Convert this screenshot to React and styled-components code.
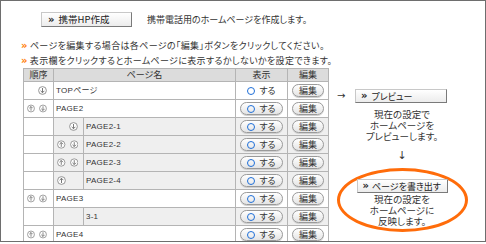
import React from "react";
import styled, { createGlobalStyle } from "styled-components";

const Global = createGlobalStyle`
  html, body { margin: 0; padding: 0; background: #fff; }
  body { font-family: "Noto Sans CJK JP", "Noto Sans", sans-serif; color: #333; }
`;

const Frame = styled.div`
  box-sizing: border-box;
  width: 486px;
  height: 242px;
  border: 1px solid #6e6e6e;
  overflow: hidden;
  font-size: 9px;
  font-feature-settings: "palt";
`;

const TopRow = styled.div`
  display: flex;
  align-items: center;
  gap: 15px;
  padding: 11px 0 0 40px;
`;

const BevelButton = styled.button`
  box-sizing: border-box;
  display: flex;
  align-items: center;
  gap: ${(p) => p.$gap || 4}px;
  width: ${(p) => p.$w}px;
  height: ${(p) => p.$h || 15}px;
  padding: 0 0 0 ${(p) => p.$pl || 6}px;
  border: 1px solid;
  border-color: #c8c8c8 #7a7a7a #7a7a7a #c8c8c8;
  background: linear-gradient(#ffffff, #ececec);
  font: inherit;
  font-size: ${(p) => p.$fs || 9.5}px;
  font-feature-settings: "palt";
  color: #222;
  line-height: 1;
  white-space: nowrap;
  overflow: hidden;
  cursor: pointer;
`;

const Chev = styled.span`
  font-family: "DejaVu Sans", sans-serif;
  font-weight: bold;
  font-size: 10px;
  color: ${(p) => p.$color || "#222"};
`;

const Desc = styled.span`
  font-size: 9px;
  color: #333;
`;

const Notes = styled.div`
  display: flex;
  flex-direction: column;
  padding: 11px 0 0 20px;
  line-height: 15px;
  letter-spacing: 0.35px;
`;

const Note = styled.div`
  display: flex;
  gap: 2px;
  align-items: center;
`;

const Main = styled.div`
  display: flex;
  align-items: flex-start;
  padding: 0 0 0 22px;
`;

const Table = styled.table`
  border-collapse: collapse;
  width: 305px;
  table-layout: fixed;
  font-size: 9px;
  & td, & th {
    border: 1px solid #b4b4b4;
    padding: 0;
    line-height: 12px;
    vertical-align: middle;
  }
`;

const HeadCell = styled.th`
  background: #dcdcdc;
  font-weight: normal;
  height: 12px;
  color: #333;
`;

const Row = styled.tr`
  height: 18px;
  background: ${(p) => (p.$sub ? "#efefef" : "#fff")};
  & > td { height: 16.6px; }
`;

const OrderCell = styled.td`
  background: #fff;
`;

const Arrows = styled.div`
  display: flex;
  justify-content: ${(p) => (p.$align === "start" ? "flex-start" : "flex-end")};
  gap: 4px;
  padding: 0 ${(p) => (p.$pr ?? 6)}px 0 ${(p) => (p.$pl ?? 3)}px;
  & svg { display: block; }
`;

const NameCell = styled.td`
  padding-left: 2px !important;
  font-family: "Liberation Sans", "Noto Sans CJK JP", sans-serif;
  font-size: 8px;
  letter-spacing: 0.25px;
  color: #333;
`;

const CenterCell = styled.td`
  text-align: center;
`;

const Pill = styled.span`
  box-sizing: border-box;
  display: inline-flex;
  align-items: center;
  justify-content: center;
  gap: 4px;
  width: ${(p) => p.$w}px;
  height: 13px;
  border-radius: 7px;
  border: 1px solid ${(p) => (p.$plain ? "transparent" : "#9a9a9a")};
  background: ${(p) =>
    p.$plain ? "transparent" : "linear-gradient(#ffffff, #e4e4e4)"};
  box-shadow: ${(p) => (p.$plain ? "none" : "0 1px 0 #d0d0d0")};
  font-size: 9px;
  line-height: 1;
  color: #333;
  vertical-align: middle;
`;

const Ring = styled.span`
  box-sizing: border-box;
  width: 8px;
  height: 8px;
  border-radius: 50%;
  border: 1.6px solid #1f6fd8;
`;

const Side = styled.div`
  display: flex;
  flex-direction: column;
  align-items: center;
  width: 130px;
  margin-left: 8px;
  padding-top: 21px;
`;

const PreviewRow = styled.div`
  display: flex;
  align-items: center;
  align-self: flex-start;
`;

const Arrow = styled.span`
  width: 18px;
  font-family: "DejaVu Sans", sans-serif;
  font-size: 10px;
  color: #333;
  line-height: 14px;
`;

const Caption = styled.div`
  text-align: center;
  font-size: 9.5px;
  line-height: 11px;
  color: #333;
  margin-top: ${(p) => p.$mt || 0}px;
`;

const DownArrow = styled.div`
  font-family: "DejaVu Sans", sans-serif;
  font-size: 11px;
  line-height: 12px;
  margin-top: 8px;
  color: #333;
`;

const Ellipse = styled.div`
  box-sizing: border-box;
  display: flex;
  flex-direction: column;
  align-items: center;
  width: 131px;
  height: 64px;
  margin-top: 6px;
  padding-top: 8px;
  border: 3px solid #ff6c0a;
  border-radius: 50%;
`;

function ArrowIcon({ up }) {
  return (
    <svg width="9" height="9" viewBox="0 0 9 9">
      <circle cx="4.5" cy="4.5" r="3.9" fill="#fff" stroke="#8a8a8a" strokeWidth="0.9" />
      {up ? (
        <path d="M4.5 7V2.3M2.6 4.2L4.5 2.3L6.4 4.2" fill="none" stroke="#6a6a6a" strokeWidth="0.9" />
      ) : (
        <path d="M4.5 2V6.7M2.6 4.8L4.5 6.7L6.4 4.8" fill="none" stroke="#6a6a6a" strokeWidth="0.9" />
      )}
    </svg>
  );
}

function ArrowPair({ up, down, ...rest }) {
  return (
    <Arrows {...rest}>
      {up && <ArrowIcon up />}
      {down && <ArrowIcon />}
    </Arrows>
  );
}

const rows = [
  { name: "TOPページ", down: true, plainShow: true },
  { name: "PAGE2", up: true, down: true },
  { name: "PAGE2-1", sub: true, down: true },
  { name: "PAGE2-2", sub: true, up: true, down: true },
  { name: "PAGE2-3", sub: true, up: true, down: true },
  { name: "PAGE2-4", sub: true, up: true },
  { name: "PAGE3", up: true, down: true },
  { name: "3-1", sub: true },
  { name: "PAGE4", up: true, down: true },
  { name: "PAGE5", up: true, down: true },
];

export default function App() {
  return (
    <>
      <Global />
      <Frame>
        <TopRow>
          <BevelButton $w={91} $pl={6}>
            <Chev>»</Chev>携帯HP作成
          </BevelButton>
          <Desc>携帯電話用のホームページを作成します。</Desc>
        </TopRow>
        <Notes>
          <Note>
            <Chev $color="#ff7a00">»</Chev>
            ページを編集する場合は各ページの「編集」ボタンをクリックしてください。
          </Note>
          <Note>
            <Chev $color="#ff7a00">»</Chev>
            表示欄をクリックするとホームページに表示するかしないかを設定できます。
          </Note>
        </Notes>
        <Main>
          <Table>
            <colgroup>
              <col style={{ width: 30 }} />
              <col style={{ width: 30 }} />
              <col style={{ width: 152 }} />
              <col style={{ width: 52 }} />
              <col style={{ width: 41 }} />
            </colgroup>
            <thead>
              <tr>
                <HeadCell>順序</HeadCell>
                <HeadCell colSpan={2}>ページ名</HeadCell>
                <HeadCell>表示</HeadCell>
                <HeadCell>編集</HeadCell>
              </tr>
            </thead>
            <tbody>
              {rows.map((r) => (
                <Row key={r.name} $sub={r.sub}>
                  {r.sub ? (
                    <>
                      <OrderCell />
                      <td>
                        <ArrowPair up={r.up} down={r.down} $align={r.up ? "start" : "end"} $pl={3} $pr={5} />
                      </td>
                      <NameCell>{r.name}</NameCell>
                    </>
                  ) : (
                    <>
                      <OrderCell>
                        <ArrowPair up={r.up} down={r.down} />
                      </OrderCell>
                      <NameCell colSpan={2}>{r.name}</NameCell>
                    </>
                  )}
                  <CenterCell>
                    <Pill $w={43} $plain={r.plainShow}>
                      <Ring />
                      する
                    </Pill>
                  </CenterCell>
                  <CenterCell>
                    <Pill $w={32}>編集</Pill>
                  </CenterCell>
                </Row>
              ))}
            </tbody>
          </Table>
          <Side>
            <PreviewRow>
              <Arrow>→</Arrow>
              <BevelButton $w={92} $h={14} $pl={5} $fs={9}>
                <Chev>»</Chev>プレビュー
              </BevelButton>
            </PreviewRow>
            <Caption $mt={6}>
              現在の設定で
              <br />
              ホームページを
              <br />
              プレビューします。
            </Caption>
            <DownArrow>↓</DownArrow>
            <Ellipse>
              <BevelButton $w={91} $h={14} $pl={5} $fs={9} $gap={3}>
                <Chev>»</Chev>ページを書き出す
              </BevelButton>
              <Caption $mt={1}>
                現在の設定を
                <br />
                ホームページに
                <br />
                反映します。
              </Caption>
            </Ellipse>
          </Side>
        </Main>
      </Frame>
    </>
  );
}
